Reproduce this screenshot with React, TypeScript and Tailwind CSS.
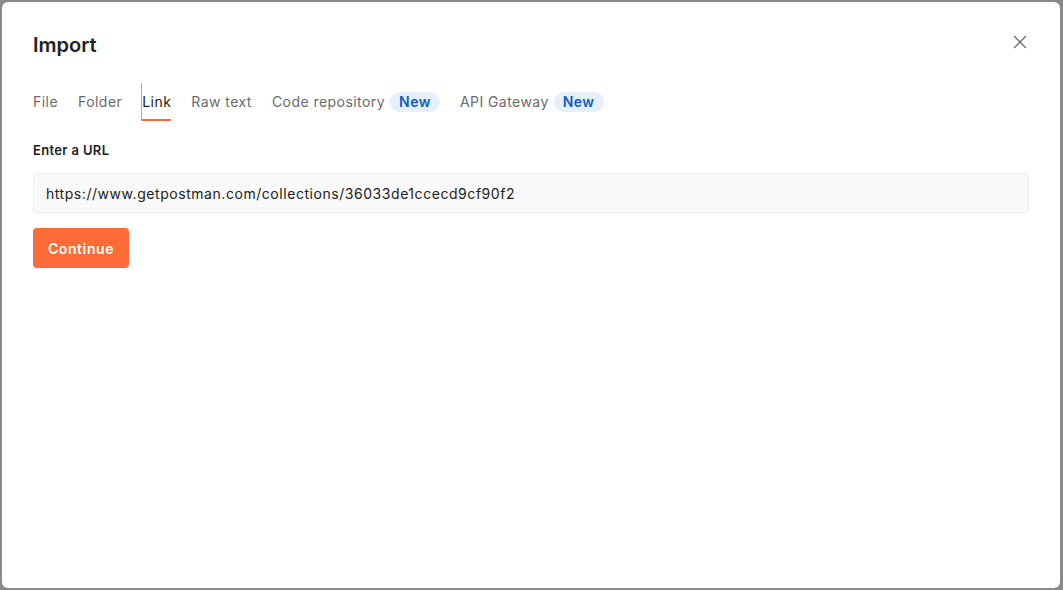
import React from "react";

function Tab({ label, active, badge }: { label: string; active?: boolean; badge?: boolean }) {
  return (
    <div className="relative flex items-center h-[38px]">
      {active && <div className="absolute left-[-1px] top-0 bottom-0 w-px bg-[#ff8a5c]" />}
      <span className={active ? "text-[#212121]" : "text-[#6b6b6b]"}>{label}</span>
      {badge && (
        <span className="ml-[5px] rounded-full bg-[#e6f0fd] px-[9px] h-[20px] flex items-center text-[14px] font-semibold text-[#0b5cc7]">
          New
        </span>
      )}
      {active && <div className="absolute left-0 right-0 bottom-0 h-[2px] bg-[#ff6c37]" />}
    </div>
  );
}

export default function App() {
  return (
    <div
      className="h-[590px] w-[1063px] bg-[#8a8a8a] p-[2px] pr-[3px]"
      style={{ fontFamily: "Inter, 'Liberation Sans', sans-serif" }}
    >
      <div className="h-[586px] w-full rounded-[6px] bg-white px-[31px] pt-[30px]">
        <div className="flex items-center justify-between">
          <h1 className="text-[20px] font-semibold text-[#212121] leading-[26px]">Import</h1>
          <button className="mr-[-3px] -translate-y-[3px] flex h-[24px] w-[24px] items-center justify-center text-[#6b6b6b]">
            <svg width="16" height="16" viewBox="0 0 16 16" fill="none" stroke="currentColor" strokeWidth="1.3">
              <path d="M2 2L14 14M14 2L2 14" />
            </svg>
          </button>
        </div>
        <div className="mt-[25px] flex items-center gap-[20px] text-[14px] leading-[20px] tracking-[0.45px]">
          <Tab label="File" />
          <Tab label="Folder" />
          <Tab label="Link" active />
          <Tab label="Raw text" />
          <Tab label="Code repository" badge />
          <Tab label="API Gateway" badge />
        </div>
        <div className="mt-[20px] text-[13px] font-semibold text-[#212121] leading-[18px] tracking-[0.35px]">Enter a URL</div>
        <div className="mt-[14px] flex h-[40px] w-full items-center rounded-[4px] border border-[#ededed] bg-[#f9f9f9] px-[12px] text-[14px] text-[#212121] tracking-[0.55px]">
          https://www.getpostman.com/collections/36033de1ccecd9cf90f2
        </div>
        <button className="mt-[15px] h-[40px] w-[96px] rounded-[4px] bg-[#ff6c37] text-[14px] font-semibold text-white tracking-[0.6px]">
          Continue
        </button>
      </div>
    </div>
  );
}
